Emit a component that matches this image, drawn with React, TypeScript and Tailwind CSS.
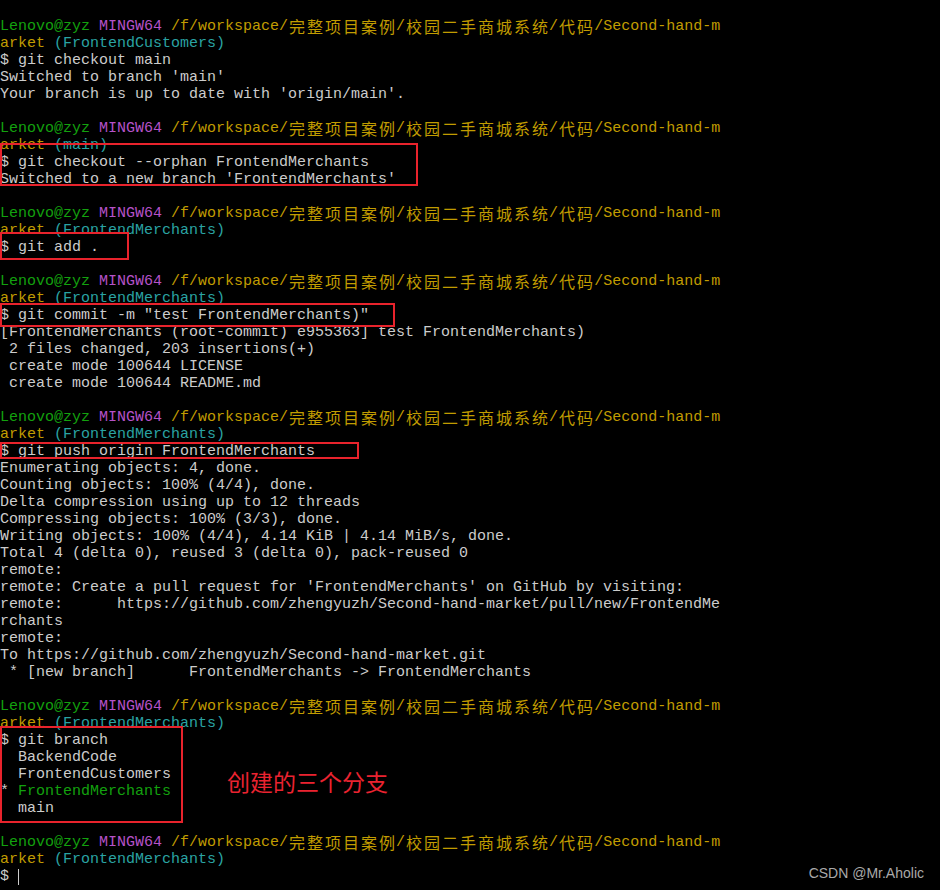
import React from "react";

type Seg = [string, string?];

const G = "text-[#13a10e]";
const P = "text-[#b552c8]";
const Y = "text-[#c19c00]";
const C = "text-[#2aa3a3]";
const W = "text-[#cccccc]";

const cjk = /[\u3000-\u9fff\uff00-\uffef]/;

function Txt({ text }: { text: string }) {
  const parts: React.ReactNode[] = [];
  let buf = "";
  let k = 0;
  for (const ch of text) {
    if (cjk.test(ch)) {
      if (buf) {
        parts.push(<span key={k++}>{buf}</span>);
        buf = "";
      }
      parts.push(
        <span
          key={k++}
          className="inline-block w-[18px] text-center text-[16px] font-['Noto_Sans_CJK_SC',sans-serif] leading-[17px] align-top"
        >
          {ch}
        </span>
      );
    } else buf += ch;
  }
  if (buf) parts.push(<span key={k++}>{buf}</span>);
  return <>{parts}</>;
}

function Line({ segs }: { segs: Seg[] }) {
  return (
    <div className="h-[17px] whitespace-pre">
      {segs.map(([t, c], i) => (
        <span key={i} className={c ?? W}>
          <Txt text={t} />
        </span>
      ))}
    </div>
  );
}

const prompt: Seg[] = [
  ["Lenovo@zyz", G],
  [" "],
  ["MINGW64", P],
  [" "],
  ["/f/workspace/完整项目案例/校园二手商城系统/代码/Second-hand-m", Y],
];
const arket = (b: string): Seg[] => [["arket ", Y], [`(${b})`, C]];

const lines: Seg[][] = [
  [],
  prompt,
  arket("FrontendCustomers"),
  [["$ git checkout main"]],
  [["Switched to branch 'main'"]],
  [["Your branch is up to date with 'origin/main'."]],
  [],
  prompt,
  arket("main"),
  [["$ git checkout --orphan FrontendMerchants"]],
  [["Switched to a new branch 'FrontendMerchants'"]],
  [],
  prompt,
  arket("FrontendMerchants"),
  [["$ git add ."]],
  [],
  prompt,
  arket("FrontendMerchants"),
  [['$ git commit -m "test FrontendMerchants)"']],
  [["[FrontendMerchants (root-commit) e955363] test FrontendMerchants)"]],
  [[" 2 files changed, 203 insertions(+)"]],
  [[" create mode 100644 LICENSE"]],
  [[" create mode 100644 README.md"]],
  [],
  prompt,
  arket("FrontendMerchants"),
  [["$ git push origin FrontendMerchants"]],
  [["Enumerating objects: 4, done."]],
  [["Counting objects: 100% (4/4), done."]],
  [["Delta compression using up to 12 threads"]],
  [["Compressing objects: 100% (3/3), done."]],
  [["Writing objects: 100% (4/4), 4.14 KiB | 4.14 MiB/s, done."]],
  [["Total 4 (delta 0), reused 3 (delta 0), pack-reused 0"]],
  [["remote:"]],
  [["remote: Create a pull request for 'FrontendMerchants' on GitHub by visiting:"]],
  [["remote:      https://github.com/zhengyuzh/Second-hand-market/pull/new/FrontendMe"]],
  [["rchants"]],
  [["remote:"]],
  [["To https://github.com/zhengyuzh/Second-hand-market.git"]],
  [[" * [new branch]      FrontendMerchants -> FrontendMerchants"]],
  [],
  prompt,
  arket("FrontendMerchants"),
  [["$ git branch"]],
  [["  BackendCode"]],
  [["  FrontendCustomers"]],
  [["* "], ["FrontendMerchants", G]],
  [["  main"]],
  [],
  prompt,
  arket("FrontendMerchants"),
];

const boxes = [
  "left-0 top-[143px] w-[418px] h-[43px]",
  "left-0 top-[232px] w-[129px] h-[28px]",
  "left-0 top-[303px] w-[395px] h-[24px]",
  "left-0 top-[442px] w-[359px] h-[17px]",
  "left-0 top-[726px] w-[183px] h-[97px]",
];

export default function App() {
  return (
    <div className="relative w-[940px] h-[890px] overflow-hidden bg-black pt-px font-['Liberation_Mono',monospace] text-[15px] leading-[17px]">
      {lines.map((l, i) => (
        <Line key={i} segs={l} />
      ))}
      <div className="h-[17px] whitespace-pre flex items-center">
        <span className={W}>$ </span>
        <span className="inline-block w-px h-[16px] bg-[#cccccc]" />
      </div>
      {boxes.map((b, i) => (
        <div key={i} className={`absolute border-2 border-[#e8232c] ${b}`} />
      ))}
      <div className="absolute left-[227px] top-[765px] text-[23px] leading-[32px] text-[#ea2330] font-['Noto_Sans_CJK_SC',sans-serif]">
        创建的三个分支
      </div>
      <div className="absolute right-[16px] top-[864px] text-[14px] leading-[18px] text-[#a9a9a9] font-['Liberation_Sans',Arial,sans-serif]">
        CSDN @Mr.Aholic
      </div>
    </div>
  );
}
